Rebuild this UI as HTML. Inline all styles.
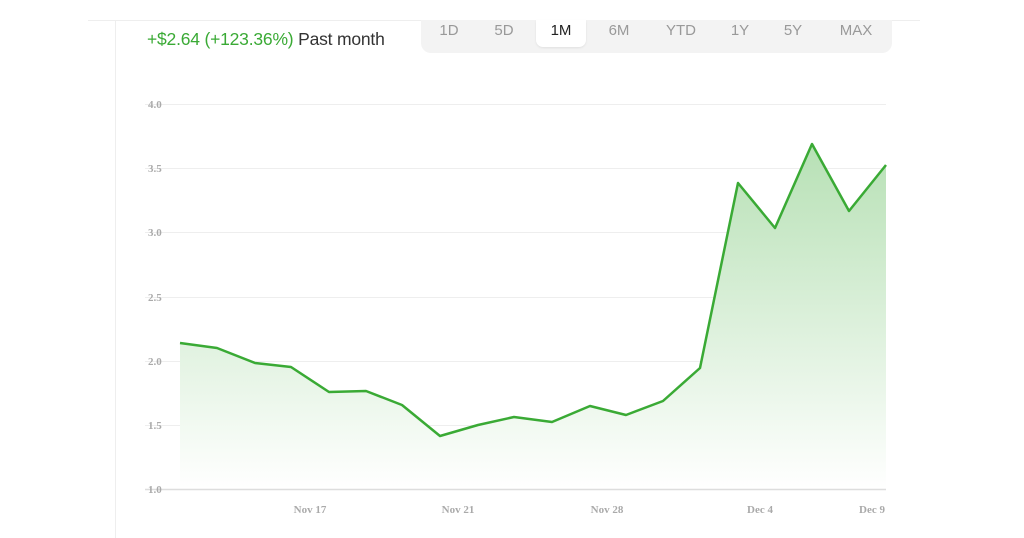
<!DOCTYPE html>
<html><head><style>
body{margin:0;width:1024px;height:538px;background:#fff;overflow:hidden;position:relative;font-family:"Liberation Sans",sans-serif}
.top{position:absolute;left:88px;top:20px;width:832px;height:1px;background:#eee}
.vl{position:absolute;left:115px;top:20px;width:1px;height:518px;background:#eee}
.chg{position:absolute;left:147px;top:29px;font-size:17.5px;color:#3aaa35;letter-spacing:-0.2px}
.chg span{color:#333}
.tabs{position:absolute;left:421px;top:20px;width:471px;height:33px;background:#f3f3f3;border-radius:0 0 10px 10px}
.tab{position:absolute;top:0;font-size:15px;color:#999;width:50px;text-align:center;line-height:21px}
.act{position:absolute;left:115px;top:0;width:50px;height:27px;background:#fff;border-radius:0 0 7px 7px;box-shadow:0 1px 2px rgba(0,0,0,.08)}
</style></head><body>
<div class="top"></div><div class="vl"></div>
<div class="chg">+$2.64 (+123.36%) <span>Past month</span></div>
<div class="tabs"><div class="act"></div>
<div class="tab" style="left:3px">1D</div>
<div class="tab" style="left:58px">5D</div>
<div class="tab" style="left:115px;color:#222">1M</div>
<div class="tab" style="left:173px">6M</div>
<div class="tab" style="left:235px">YTD</div>
<div class="tab" style="left:294px">1Y</div>
<div class="tab" style="left:347px">5Y</div>
<div class="tab" style="left:410px">MAX</div>
</div>
<svg width="1024" height="538" style="position:absolute;left:0;top:0">
<defs><linearGradient id="g" gradientUnits="userSpaceOnUse" x1="0" y1="140" x2="0" y2="489">
<stop offset="0" stop-color="#b6e0b4"/><stop offset="1" stop-color="#ffffff"/></linearGradient></defs>
<g stroke="#eee" stroke-width="1">
<line x1="145" y1="104.5" x2="886" y2="104.5"/><line x1="145" y1="168.5" x2="886" y2="168.5"/>
<line x1="145" y1="232.5" x2="886" y2="232.5"/><line x1="145" y1="297.5" x2="886" y2="297.5"/>
<line x1="145" y1="361.5" x2="886" y2="361.5"/><line x1="145" y1="425.5" x2="886" y2="425.5"/>
</g>
<path d="M180,343 L217,348 L255,363 L291,367 L329,392 L366,391 L402,405 L440,436 L478,425 L514,417 L552,422 L590,406 L626,415 L663,401 L700,368 L738,183 L775,228 L812,144 L849,211 L886,165 L886,489 L180,489Z" fill="url(#g)"/>
<line x1="145" y1="489.5" x2="886" y2="489.5" stroke="#ddd" stroke-width="1.5"/>
<path d="M180,343 L217,348 L255,363 L291,367 L329,392 L366,391 L402,405 L440,436 L478,425 L514,417 L552,422 L590,406 L626,415 L663,401 L700,368 L738,183 L775,228 L812,144 L849,211 L886,165" fill="none" stroke="#3aaa35" stroke-width="2.5" stroke-linejoin="round"/>
<g font-family="Liberation Serif,serif" font-size="11" font-weight="bold" fill="#aaa">
<text x="148" y="108">4.0</text><text x="148" y="172">3.5</text><text x="148" y="236">3.0</text>
<text x="148" y="301">2.5</text><text x="148" y="365">2.0</text><text x="148" y="429">1.5</text><text x="148" y="493">1.0</text>
<g text-anchor="middle"><text x="310" y="513">Nov 17</text><text x="458" y="513">Nov 21</text><text x="607" y="513">Nov 28</text><text x="760" y="513">Dec 4</text><text x="872" y="513">Dec 9</text></g>
</g>
</svg>
</body></html>
